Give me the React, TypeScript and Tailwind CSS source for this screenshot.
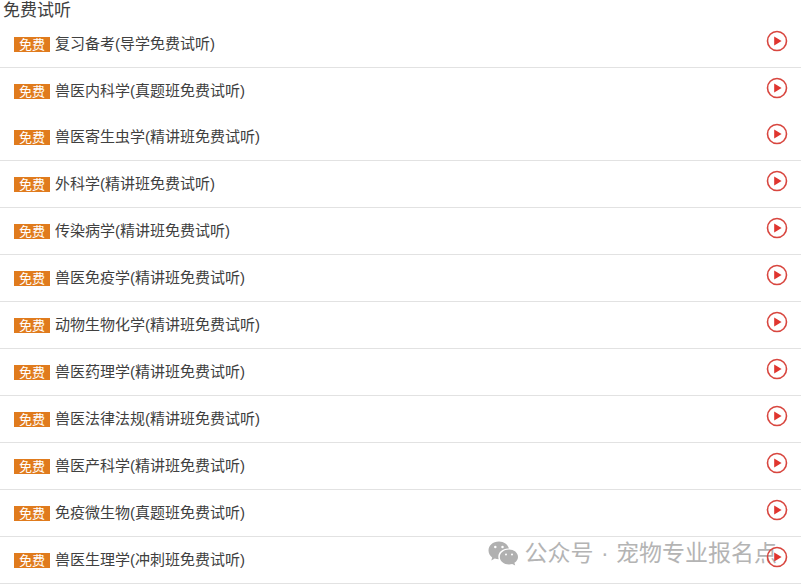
interface Lesson {
  id: number;
  title: string;
  divider?: boolean;
}

const lessons: Lesson[] = [
  { id: 1, title: '复习备考(导学免费试听)' },
  { id: 2, title: '兽医内科学(真题班免费试听)', divider: false },
  { id: 3, title: '兽医寄生虫学(精讲班免费试听)' },
  { id: 4, title: '外科学(精讲班免费试听)' },
  { id: 5, title: '传染病学(精讲班免费试听)' },
  { id: 6, title: '兽医免疫学(精讲班免费试听)' },
  { id: 7, title: '动物生物化学(精讲班免费试听)' },
  { id: 8, title: '兽医药理学(精讲班免费试听)' },
  { id: 9, title: '兽医法律法规(精讲班免费试听)' },
  { id: 10, title: '兽医产科学(精讲班免费试听)' },
  { id: 11, title: '免疫微生物(真题班免费试听)' },
  { id: 12, title: '兽医生理学(冲刺班免费试听)' },
];

function PlayIcon() {
  return (
    <svg className="block h-[22px] w-[22px]" viewBox="0 0 22 22" fill="none" aria-hidden="true">
      <circle cx="11" cy="11" r="9.5" stroke="#d8463f" strokeWidth="1.6" />
      <path d="M8.2 6.6v8.8L15.6 11z" fill="#e0352f" />
    </svg>
  );
}

function WechatIcon() {
  return (
    <svg className="h-[26px] w-8 shrink-0" viewBox="0 0 32 26" fill="#b0b0b0" aria-hidden="true">
      <path
        fillRule="evenodd"
        d="M12 1.500C5.600 1.500 1.500 5.500 1.500 10.500c0 2.900 1.500 5.200 3.700 6.900L4.300 20.500l3.500-1.900c1.300.4 2.500.6 3.900.6-.3-.8-.4-1.600-.4-2.400 0-4.700 4.300-8.300 9.600-8.300h1C21 4.400 16.900 1.500 12 1.500zM8.300 5.800a1.250 1.250 0 110 2.500 1.250 1.250 0 010-2.500zm7.200 0a1.250 1.250 0 110 2.500 1.250 1.250 0 010-2.500z"
      />
      <path
        fillRule="evenodd"
        d="M31 16.900c0-4.200-4.100-7.400-9-7.400s-9.200 3.300-9.200 7.400c0 4.200 4.200 7.500 9.200 7.500 1.100 0 2.200-.2 3.200-.5l3 1.600-.8-2.700c2.200-1.500 3.600-3.600 3.600-5.900zM19 13.500a1 1 0 110 2 1 1 0 010-2zm6 0a1 1 0 110 2 1 1 0 010-2z"
      />
    </svg>
  );
}

function LessonRow({ title, divider = true }: Lesson) {
  return (
    <li className={`flex items-start justify-between pr-[13px] pl-3.5 ${divider ? 'border-b border-[#e2e2e2]' : ''}`}>
      <div className="flex h-[46px] items-center gap-[5px]">
        <span className="bg-[#e07b1d] px-[5px] text-[13px] leading-[15px] text-white">免费</span>
        <span className="text-[15px] leading-5">{title}</span>
      </div>
      <button type="button" aria-label={`播放 ${title}`} className="relative z-10 mt-[9px] cursor-pointer rounded-full">
        <PlayIcon />
      </button>
    </li>
  );
}

export default function App() {
  return (
    <main className="relative bg-white font-['Liberation_Sans','Noto_Sans_CJK_SC',sans-serif] text-[#404040]">
      <h1 className="pl-[3px] text-[17px] leading-[21px]">免费试听</h1>
      <ul>
        {lessons.map((lesson) => (
          <LessonRow key={lesson.id} {...lesson} />
        ))}
      </ul>
      <div className="pointer-events-none absolute right-6 bottom-[15px] flex items-center gap-1.5 text-[#b4b4b4]">
        <WechatIcon />
        <p className="text-[23px] leading-8">
          公众号<span className="px-px"> · </span>宠物专业报名点
        </p>
      </div>
    </main>
  );
}
